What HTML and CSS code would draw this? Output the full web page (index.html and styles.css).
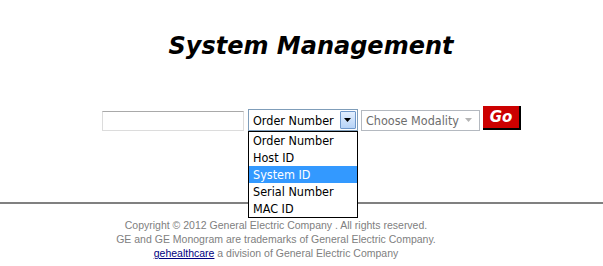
FILE: index.html
```
<!DOCTYPE html>
<html lang="en">
<head>
    <meta charset="UTF-8">
    <title>System Management</title>
    <link rel="stylesheet" href="styles.css">
</head>
<body>
    <div class="page">
        <h1 class="title">System Management</h1>

        <form class="search-form" onsubmit="return false;">
            <input type="text" class="search-input">
            <div class="combo combo-open">
                <span class="combo-value">Order Number</span>
                <span class="combo-button">
                    <svg width="8" height="5" viewBox="0 0 8 5"><path d="M0 0h7L3.5 4z" fill="#000"/></svg>
                </span>
                <ul class="combo-list">
                    <li>Order Number</li>
                    <li>Host ID</li>
                    <li class="selected">System ID</li>
                    <li>Serial Number</li>
                    <li>MAC ID</li>
                </ul>
            </div>
            <div class="combo combo-disabled">
                <span class="combo-value">Choose Modality</span>
                <span class="combo-arrow">
                    <svg width="8" height="5" viewBox="0 0 8 5"><path d="M0 0h7L3.5 4z" fill="#b5b5b5"/></svg>
                </span>
            </div>
            <button type="submit" class="go-button">Go</button>
        </form>
    </div>

    <hr class="divider">

    <div class="footer">
        <p>Copyright &copy; 2012 General Electric Company . All rights reserved.</p>
        <p>GE and GE Monogram are trademarks of General Electric Company.</p>
        <p><a href="#">gehealthcare</a> a division of General Electric Company</p>
    </div>
</body>
</html>
```

FILE: styles.css
```
* {
    margin: 0;
    padding: 0;
    box-sizing: border-box;
}

body {
    background: #fff;
    font-family: "DejaVu Sans", Verdana, sans-serif;
    color: #000;
}

.page {
    padding-left: 20px;
    height: 202px;
}

.title {
    padding-top: 32px;
    padding-right: 1px;
    text-align: center;
    font-size: 24px;
    font-style: italic;
    font-weight: bold;
    line-height: 28px;
}

.search-form {
    margin-top: 46px;
    display: flex;
    justify-content: center;
    align-items: flex-end;
    gap: 3px;
}

.search-input {
    width: 142px;
    height: 20px;
    margin-right: 1px;
    border: 1px solid #dcdcdc;
    border-top-color: #a9a9a9;
    outline: none;
}

.combo {
    position: relative;
    display: flex;
    align-items: center;
    height: 22px;
    font-family: "DejaVu Sans Condensed", "DejaVu Sans", sans-serif;
    font-size: 12.5px;
    background: #fff;
}

.combo-open {
    width: 110px;
    border: 1px solid #7f9db9;
}

.combo-value {
    flex: 1;
    padding-left: 4px;
    white-space: nowrap;
    overflow: hidden;
}

.combo-button {
    width: 16px;
    height: 18px;
    margin-right: 1px;
    display: flex;
    align-items: center;
    justify-content: center;
    border: 1px solid #6f98cb;
    border-radius: 1px;
    background: linear-gradient(#e3efff, #b6d3f7);
}

.combo-list {
    position: absolute;
    top: 21px;
    left: -1px;
    width: 110px;
    list-style: none;
    background: #fff;
    border: 1px solid #000;
    z-index: 10;
}

.combo-list li {
    height: 17px;
    line-height: 17px;
    padding-left: 4px;
}

.combo-list .selected {
    background: #3399ff;
    color: #fff;
}

.combo-disabled {
    width: 119px;
    height: 21px;
    border: 1px solid #b4b9c0;
    color: #6d6d6d;
}

.combo-arrow {
    width: 16px;
    display: flex;
    justify-content: center;
    margin-right: 2px;
}

.go-button {
    width: 38px;
    height: 24px;
    margin-bottom: 1px;
    background: #cc0000;
    color: #fff;
    font-family: "DejaVu Sans", Verdana, sans-serif;
    font-size: 15px;
    font-style: italic;
    font-weight: bold;
    border: none;
    border-right: 2px solid #000;
    border-bottom: 2px solid #000;
    cursor: pointer;
}

.divider {
    height: 2px;
    border: none;
    background: #808080;
}

.footer {
    padding-top: 14px;
    padding-right: 51px;
    text-align: center;
    font-family: "Liberation Sans", Arial, sans-serif;
    font-size: 10.5px;
    line-height: 14px;
    color: #808080;
}

.footer a {
    color: #000080;
}
```
